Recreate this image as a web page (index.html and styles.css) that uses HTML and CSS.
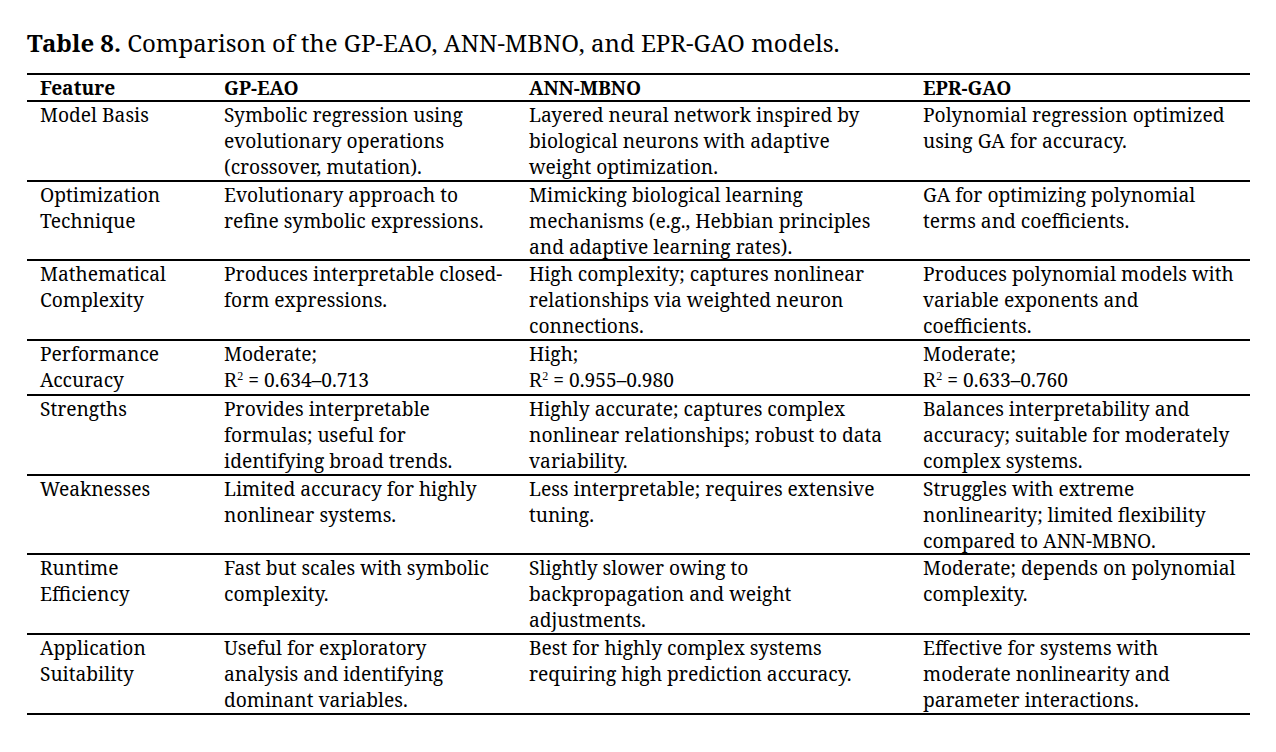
FILE: index.html
```html
<!DOCTYPE html>
<html lang="en">
<head>
<meta charset="utf-8">
<title>Table 8</title>
<link rel="stylesheet" href="styles.css">
</head>
<body>
<div class="caption"><span class="caption-label">Table 8.</span> Comparison of the GP-EAO, ANN-MBNO, and EPR-GAO models.</div>
<table class="cmp">
  <colgroup>
    <col class="c-feature">
    <col class="c-gp">
    <col class="c-ann">
    <col class="c-epr">
  </colgroup>
  <thead>
    <tr><th>Feature</th><th>GP-EAO</th><th>ANN-MBNO</th><th>EPR-GAO</th></tr>
  </thead>
  <tbody>
    <tr>
      <td>Model Basis</td>
      <td>Symbolic regression using<br>evolutionary operations<br>(crossover, mutation).</td>
      <td>Layered neural network inspired by<br>biological neurons with adaptive<br>weight optimization.</td>
      <td>Polynomial regression optimized<br>using GA for accuracy.</td>
    </tr>
    <tr>
      <td>Optimization<br>Technique</td>
      <td>Evolutionary approach to<br>refine symbolic expressions.</td>
      <td>Mimicking biological learning<br>mechanisms (e.g., Hebbian principles<br>and adaptive learning rates).</td>
      <td>GA for optimizing polynomial<br>terms and coefficients.</td>
    </tr>
    <tr>
      <td>Mathematical<br>Complexity</td>
      <td>Produces interpretable closed-<br>form expressions.</td>
      <td>High complexity; captures nonlinear<br>relationships via weighted neuron<br>connections.</td>
      <td>Produces polynomial models with<br>variable exponents and<br>coefficients.</td>
    </tr>
    <tr>
      <td>Performance<br>Accuracy</td>
      <td>Moderate;<br><span class="rsym">R<sup>2</sup></span> = 0.634–0.713</td>
      <td>High;<br><span class="rsym">R<sup>2</sup></span> = 0.955–0.980</td>
      <td>Moderate;<br><span class="rsym">R<sup>2</sup></span> = 0.633–0.760</td>
    </tr>
    <tr>
      <td>Strengths</td>
      <td>Provides interpretable<br>formulas; useful for<br>identifying broad trends.</td>
      <td>Highly accurate; captures complex<br>nonlinear relationships; robust to data<br>variability.</td>
      <td>Balances interpretability and<br>accuracy; suitable for moderately<br>complex systems.</td>
    </tr>
    <tr>
      <td>Weaknesses</td>
      <td>Limited accuracy for highly<br>nonlinear systems.</td>
      <td>Less interpretable; requires extensive<br>tuning.</td>
      <td>Struggles with extreme<br>nonlinearity; limited flexibility<br>compared to ANN-MBNO.</td>
    </tr>
    <tr>
      <td>Runtime<br>Efficiency</td>
      <td>Fast but scales with symbolic<br>complexity.</td>
      <td>Slightly slower owing to<br>backpropagation and weight<br>adjustments.</td>
      <td>Moderate; depends on polynomial<br>complexity.</td>
    </tr>
    <tr>
      <td>Application<br>Suitability</td>
      <td>Useful for exploratory<br>analysis and identifying<br>dominant variables.</td>
      <td>Best for highly complex systems<br>requiring high prediction accuracy.</td>
      <td>Effective for systems with<br>moderate nonlinearity and<br>parameter interactions.</td>
    </tr>
  </tbody>
</table>
</body>
</html>
```
FILE: styles.css
```css
html, body {
  margin: 0;
  padding: 0;
  background: #ffffff;
}

body {
  font-family: "Noto Serif", "DejaVu Serif", serif;
  color: #000000;
}

.caption {
  margin: 28px 0 15px 27px;
  font-size: 24px;
  line-height: 30px;
  white-space: nowrap;
}

.caption-label {
  font-weight: bold;
}

.cmp {
  margin-left: 27px;
  width: 1223px;
  border-collapse: collapse;
  table-layout: fixed;
  font-size: 19.2px;
  line-height: 25.9px;
}

.c-feature { width: 184px; }
.c-gp { width: 305px; }
.c-ann { width: 394px; }
.c-epr { width: 340px; }

.cmp th,
.cmp td {
  padding: 0 0 0 13px;
  text-align: left;
  vertical-align: top;
  white-space: nowrap;
}

.cmp th {
  font-weight: bold;
  line-height: 25px;
}

.cmp thead tr {
  border-top: 2px solid #000;
  border-bottom: 2px solid #000;
}

.cmp tbody tr {
  border-bottom: 2px solid #000;
}

.rsym {
  font-family: "Liberation Serif", "Times New Roman", serif;
  font-size: 20px;
}

.rsym sup {
  font-size: 12px;
  line-height: 0;
  vertical-align: 7px;
}
```
